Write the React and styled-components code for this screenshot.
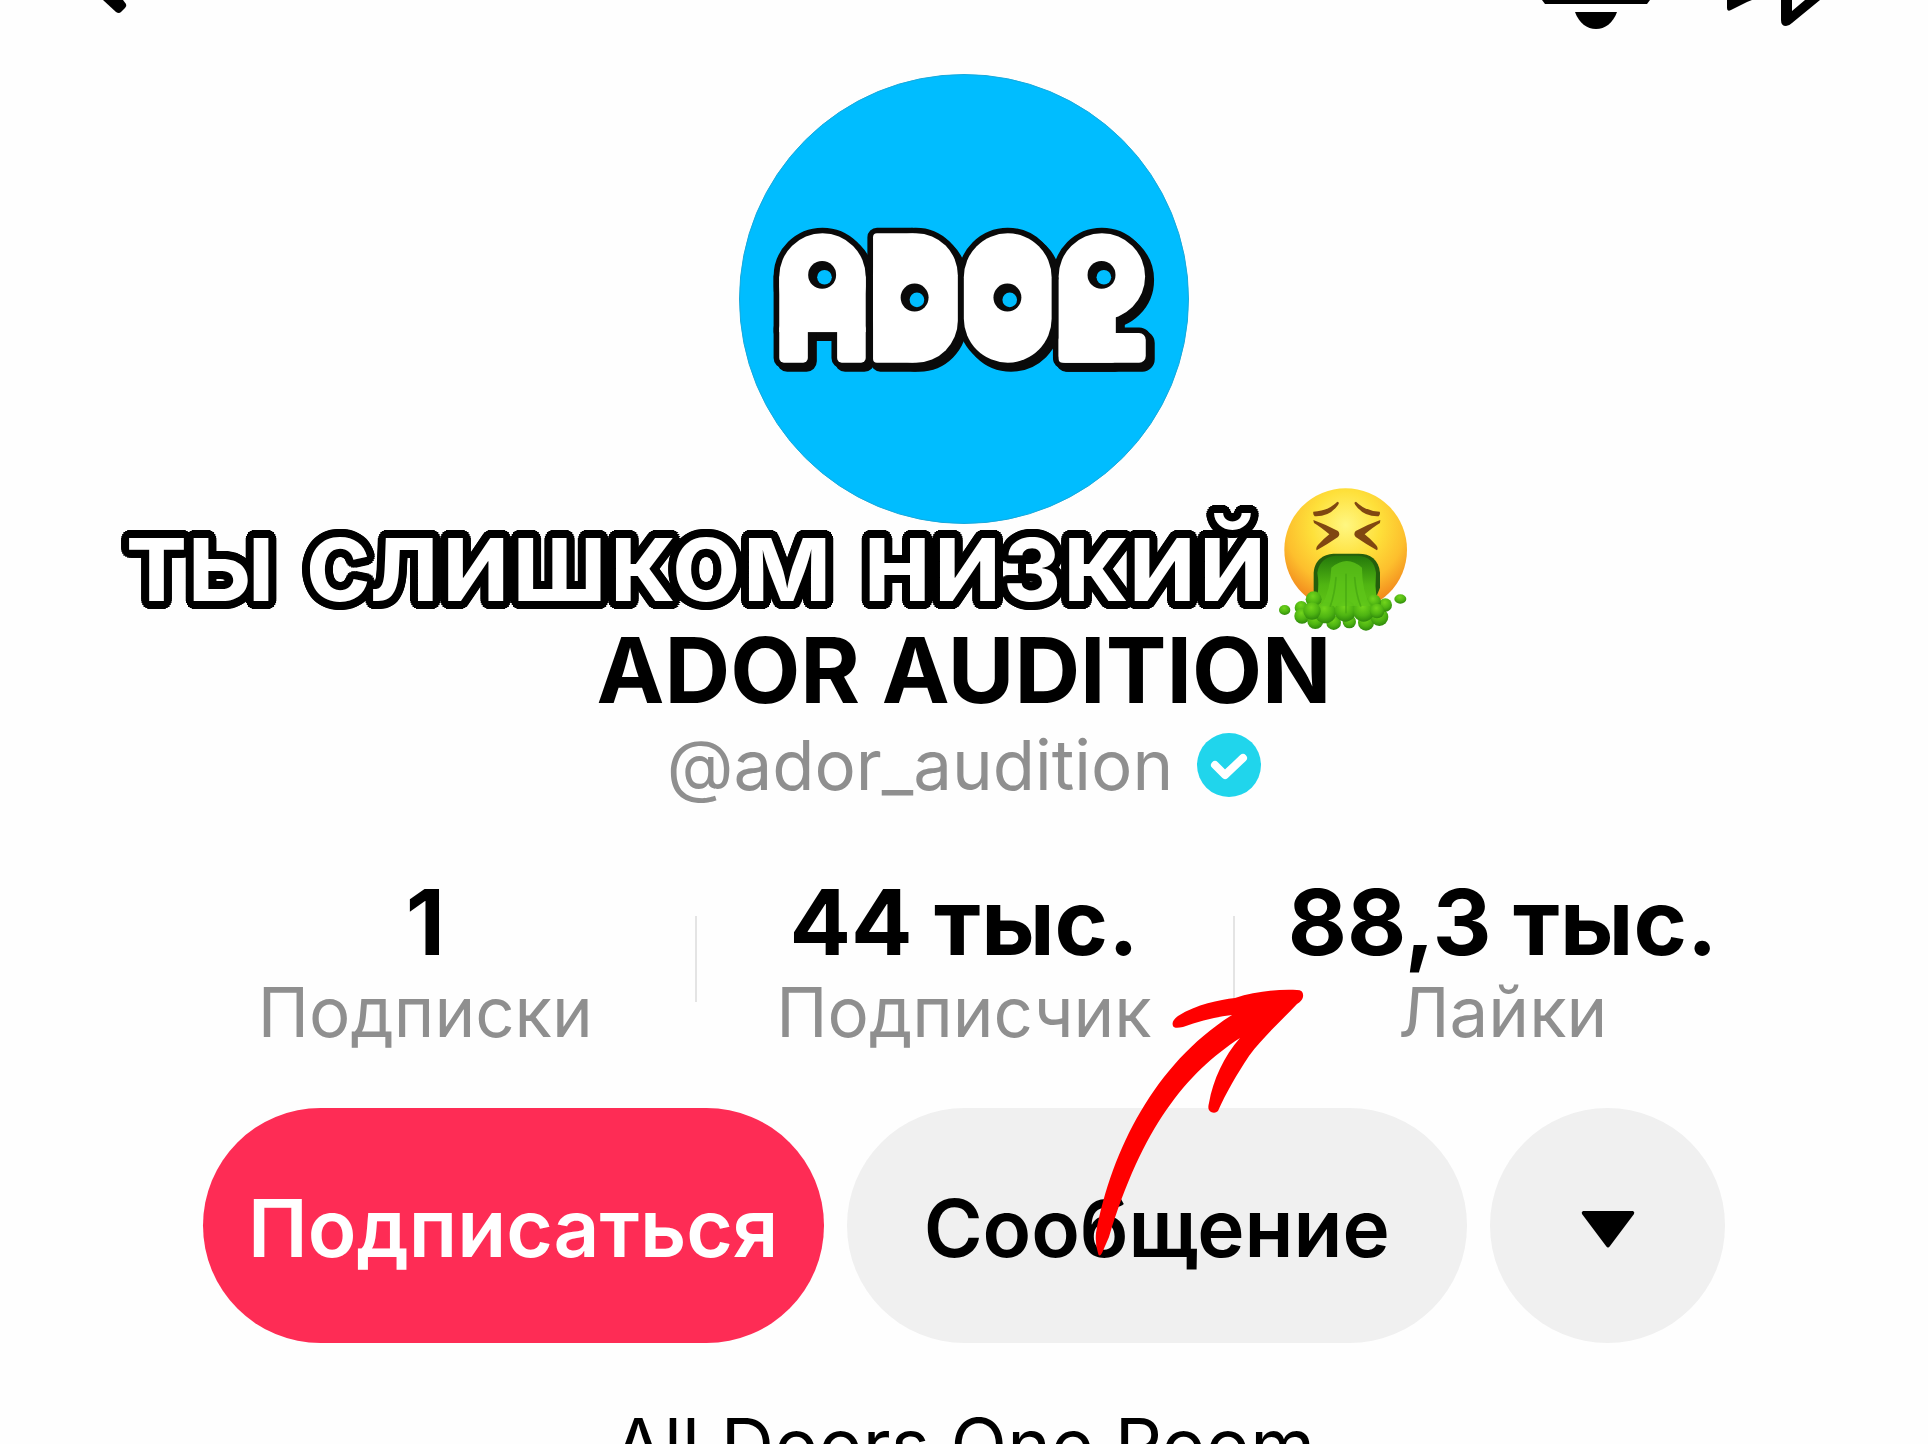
import React, { useState } from 'react'
import styled, { createGlobalStyle } from 'styled-components'

function App() {
    const [followed, setFollowed] = useState(false)

    const stats = [
        { id: 1, value: '1', label: 'Подписки' },
        { id: 2, value: '44 тыс.', label: 'Подписчик' },
        { id: 3, value: '88,3 тыс.', label: 'Лайки' },
    ]

    const renderStats = () => {
        return stats.map((stat) => (
            <Stat key={stat.id}>
                <StatValue>{stat.value}</StatValue>
                <StatLabel>{stat.label}</StatLabel>
            </Stat>
        ))
    }

    return (
        <Page>
            <GlobalStyle />
            <TopBar>
                <IconButton aria-label="Назад">
                    <BackIcon />
                </IconButton>
                <TopActions>
                    <IconButton aria-label="Уведомления">
                        <BellIcon />
                    </IconButton>
                    <IconButton aria-label="Поделиться">
                        <ShareIcon />
                    </IconButton>
                </TopActions>
            </TopBar>
            <Profile>
                <Avatar>
                    <AdorLogo />
                </Avatar>
                <Name>ADOR AUDITION</Name>
                <HandleRow>
                    <Handle>@ador_audition</Handle>
                    <VerifiedIcon />
                </HandleRow>
                <Stats>{renderStats()}</Stats>
                <Actions>
                    <PillButton $primary aria-pressed={followed} onClick={() => setFollowed(!followed)}>
                        Подписаться
                    </PillButton>
                    <PillButton>Сообщение</PillButton>
                    <RoundButton aria-label="Ещё">
                        <svg width="54" height="38" viewBox="0 0 54 38">
                            <path d="M2 0H52Q54 1 53 3L29 35Q27 38 25 35L1 3Q0 1 2 0Z" fill="#000" />
                        </svg>
                    </RoundButton>
                </Actions>
                <Bio>All Doors One Room</Bio>
                <Caption>
                    <CaptionText>ты слишком низкий</CaptionText>
                    <SickFace />
                </Caption>
                <ArrowMark />
            </Profile>
        </Page>
    )
}

// icons
const BackIcon = () => (
    <svg width="32" height="16" viewBox="0 0 32 16">
        <path d="M8 0H28L31 4Q32 6 30 8L26 12Q24 14 21 12Z" fill="#000" />
    </svg>
)

const BellIcon = () => (
    <svg width="108" height="30" viewBox="0 0 108 30">
        <path d="M0 0H108L105 4H3Z" fill="#000" />
        <path d="M33 12H75C71 23 63 29 54 29S37 23 33 12Z" fill="#000" />
    </svg>
)

const ShareIcon = () => (
    <svg width="96" height="30" viewBox="0 0 96 30">
        <path d="M0 0H25L20 2L4 10Q0 12 0 8Z" fill="#000" />
        <path d="M54 0V20Q54 26 59 26Q62 26 65 23L93 0H78L65 11V0Z" fill="#000" />
    </svg>
)

const VerifiedIcon = () => (
    <svg width="64" height="64" viewBox="0 0 64 64" role="img" aria-label="Подтверждено">
        <circle cx="32" cy="32" r="32" fill="#20d5ec" />
        <path d="M18 32L28 42L46 25" fill="none" stroke="#fff" strokeWidth="8" strokeLinecap="round" strokeLinejoin="round" />
    </svg>
)

const logoHoles = [[277, 223], [555, 291], [834, 291], [1117, 223]]

// balloon shapes, used for the black edge, its shadow and the white face
const LogoBody = () => (
    <>
        <rect x="148" y="98" width="260" height="290" rx="130" />
        <rect x="148" y="228" width="260" height="167" />
        <rect x="148" y="370" width="86" height="117" rx="14" />
        <rect x="322" y="370" width="86" height="117" rx="14" />
        <rect x="430" y="98" width="130" height="389" rx="12" />
        <rect x="430" y="98" width="255" height="389" rx="126" />
        <rect x="703" y="98" width="264" height="389" rx="132" />
        <circle cx="1118" cy="228" r="130" />
        <rect x="988" y="228" width="172" height="259" rx="12" />
        <rect x="988" y="398" width="262" height="89" rx="20" />
    </>
)

const AdorLogo = () => (
    <svg width="100%" viewBox="0 0 1347 1347" role="img" aria-label="ADOR">
        <g transform="translate(-30 378)">
            <g fill="#0a0a0a" stroke="#0a0a0a" strokeWidth="34" strokeLinejoin="round">
                <LogoBody />
                <g transform="translate(10 10)">
                    <LogoBody />
                </g>
            </g>
            <g fill="#fff">
                <LogoBody />
            </g>
            {logoHoles.map(([x, y]) => (
                <g key={x}>
                    <circle cx={x} cy={y} r="42" fill="#0a0a0a" />
                    <circle cx={x + 7} cy={y + 7} r="22" fill="#00bdff" />
                </g>
            ))}
        </g>
    </svg>
)

const drops = [
    [155, 385, 24], [118, 410, 20], [120, 435, 23], [160, 450, 24], [215, 455, 22],
    [262, 452, 20], [312, 455, 24], [352, 438, 27], [370, 402, 20], [335, 392, 22],
    [190, 425, 32], [250, 420, 32], [305, 420, 32], [345, 420, 22], [150, 420, 26],
]

const SickFace = () => (
    <svg width="130" height="145" viewBox="48 48 390 435" role="img" aria-label="🤮">
        <defs>
            <radialGradient id="face" cx="0.5" cy="0.3" r="0.7">
                <stop offset="0" stopColor="#fff782" />
                <stop offset="0.4" stopColor="#fee03a" />
                <stop offset="0.7" stopColor="#fdbf2d" />
                <stop offset="1" stopColor="#f0801a" />
            </radialGradient>
            <linearGradient id="mouth" x1="0" y1="0" x2="0" y2="1">
                <stop offset="0" stopColor="#24780b" />
                <stop offset="0.5" stopColor="#50b512" />
                <stop offset="1" stopColor="#67ca18" />
            </linearGradient>
            <radialGradient id="drop" cx="0.45" cy="0.3" r="0.7">
                <stop offset="0" stopColor="#72d51c" />
                <stop offset="0.6" stopColor="#4eb412" />
                <stop offset="1" stopColor="#2f8a0b" />
            </radialGradient>
        </defs>
        <circle cx="251" cy="236" r="184" fill="url(#face)" />
        <g fill="#804711">
            <path d="M154 122Q198 120 226 92Q234 94 228 102Q202 138 158 136Q152 130 154 122Z" />
            <path d="M353 122Q310 120 282 92Q274 94 280 102Q306 138 350 136Q356 130 353 122Z" />
            <path d="M154 147Q190 160 228 180Q236 190 228 198Q196 220 164 238Q160 232 168 222Q184 204 202 190Q176 168 156 156Z" />
            <path d="M355 147Q318 160 281 180Q273 190 281 198Q313 220 345 238Q350 232 342 222Q326 204 308 190Q334 168 354 156Z" />
        </g>
        <path d="M155 360V305C158 262 190 248 220 248H290C325 248 350 265 354 305V350L340 385H165Z" fill="#245f0c" />
        <path d="M166 375Q172 340 166 305C172 268 195 256 222 254H288C320 256 338 272 342 305Q338 345 344 385L310 430H190Z" fill="url(#mouth)" />
        {drops.map(([x, y, r]) => (
            <circle key={x + '-' + y} cx={x} cy={y} r={r} fill="url(#drop)" />
        ))}
        <path d="M208 290Q205 360 178 405H325Q300 360 300 290Q255 250 208 290Z" fill="#5fc51a" opacity="0.75" />
        <path d="M222 320Q218 370 205 405M252 310V425M278 320Q282 370 296 405" fill="none" stroke="#3fa00f" strokeWidth="5" strokeLinecap="round" opacity="0.6" />
        <ellipse cx="68" cy="417" rx="17" ry="15" fill="url(#drop)" />
        <ellipse cx="415" cy="384" rx="18" ry="14" fill="url(#drop)" />
    </svg>
)

const ArrowMark = () => (
    <Arrow viewBox="0 0 212 270" aria-hidden="true">
        <path
            fill="#ff0000"
            d="M203 2Q210 2 209 9Q208 13 203 16C188 32 169 49 155 68C143 86 132 105 124 123Q121 126 117 124Q113 122 115 115C119 92 130 68 146 50C92 85 48 140 15 249L8 265Q5 270 4 265Q1 256 2 245C18 160 62 75 138 27C121 29 105 33 89 39Q80 41 79 38Q77 33 84 28C103 16 125 12 141 10C160 4 182 1 203 2Z"
        />
    </Arrow>
)

export default App

// round black edge for the sticker text
const outline = (size) => {
    const steps = 24
    const shadows = []
    for (let i = 0; i < steps; i++) {
        const angle = (i / steps) * Math.PI * 2
        shadows.push(`${(Math.cos(angle) * size).toFixed(1)}px ${(Math.sin(angle) * size).toFixed(1)}px 0 #000`)
    }
    return shadows.join(', ')
}

// styles
const GlobalStyle = createGlobalStyle`
    body {
        margin: 0;
        background: #fefefe;
    }
    * {
        box-sizing: border-box;
    }
    svg {
        display: block;
        flex-shrink: 0;
    }
`
const Page = styled.div`
    height: 100vh;
    overflow: hidden;
    background: #fefefe;
    color: #000;
    font-family: Inter, "Liberation Sans", sans-serif;
`
const TopBar = styled.header`
    display: flex;
    justify-content: space-between;
    align-items: flex-start;
    height: 30px;
    padding: 0 105px 0 95px;
`
const TopActions = styled.div`
    display: flex;
    gap: 77px;
`
const IconButton = styled.button`
    padding: 0;
    border: none;
    background: none;
    cursor: pointer;
`
const Profile = styled.main`
    position: relative;
    display: flex;
    flex-direction: column;
    align-items: center;
    padding: 44px 156px 0;
`
const Avatar = styled.div`
    width: 450px;
    height: 450px;
    border-radius: 50%;
    background: #00bdff;
    border: 1px solid #18a9dc;
    overflow: hidden;
`
const Name = styled.h1`
    margin: 100px 0 0;
    font-size: 91px;
    font-weight: 700;
    line-height: 92px;
    white-space: nowrap;
`
const HandleRow = styled.div`
    display: flex;
    align-items: center;
    gap: 24px;
    margin-top: 16px;
`
const Handle = styled.span`
    font-size: 69px;
    line-height: 66px;
    color: #8f8f8f;
    font-weight: 400;
`
const Stats = styled.div`
    display: grid;
    grid-template-columns: repeat(3, 1fr);
    width: 100%;
    margin-top: 78px;
`
const Stat = styled.div`
    position: relative;
    display: flex;
    flex-direction: column;
    align-items: center;
    white-space: nowrap;

    & + &::before {
        content: "";
        position: absolute;
        left: 0;
        top: 40px;
        width: 2px;
        height: 86px;
        background: #e4e4e4;
    }
`
const StatValue = styled.strong`
    font-size: 91px;
    font-weight: 700;
    line-height: 92px;
`
const StatLabel = styled.span`
    font-size: 69px;
    font-weight: 400;
    line-height: 88px;
    color: #8f8f8f;
`
const Actions = styled.div`
    display: flex;
    gap: 23px;
    width: 100%;
    padding: 0 47px;
    margin-top: 52px;
`
const PillButton = styled.button`
    flex: 1;
    height: 235px;
    padding: 4px 0 0;
    border: none;
    border-radius: 118px;
    background: ${(props) => (props.$primary ? '#fe2c55' : '#f0f0f0')};
    color: ${(props) => (props.$primary ? '#fff' : '#000')};
    font-family: inherit;
    font-size: 80px;
    font-weight: 600;
    cursor: pointer;
`
const RoundButton = styled.button`
    display: flex;
    justify-content: center;
    align-items: center;
    width: 235px;
    height: 235px;
    padding: 8px 0 0;
    border: none;
    border-radius: 50%;
    background: #f0f0f0;
    cursor: pointer;
`
const Bio = styled.p`
    margin: 55px 0 0;
    font-size: 74px;
    font-weight: 400;
    line-height: 94px;
`
// sticker text and the arrow lie over the profile
const Caption = styled.div`
    position: absolute;
    top: 457px;
    left: calc(50% - 836px);
    display: flex;
    align-items: center;
    gap: 10px;
`
const CaptionText = styled.span`
    font-size: 115px;
    font-weight: 600;
    line-height: 145px;
    color: #fff;
    white-space: nowrap;
    text-shadow: ${outline(8)};
`
const Arrow = styled.svg`
    position: absolute;
    top: 958px;
    left: calc(50% + 130px);
    width: 212px;
    height: 270px;
    pointer-events: none;
`
